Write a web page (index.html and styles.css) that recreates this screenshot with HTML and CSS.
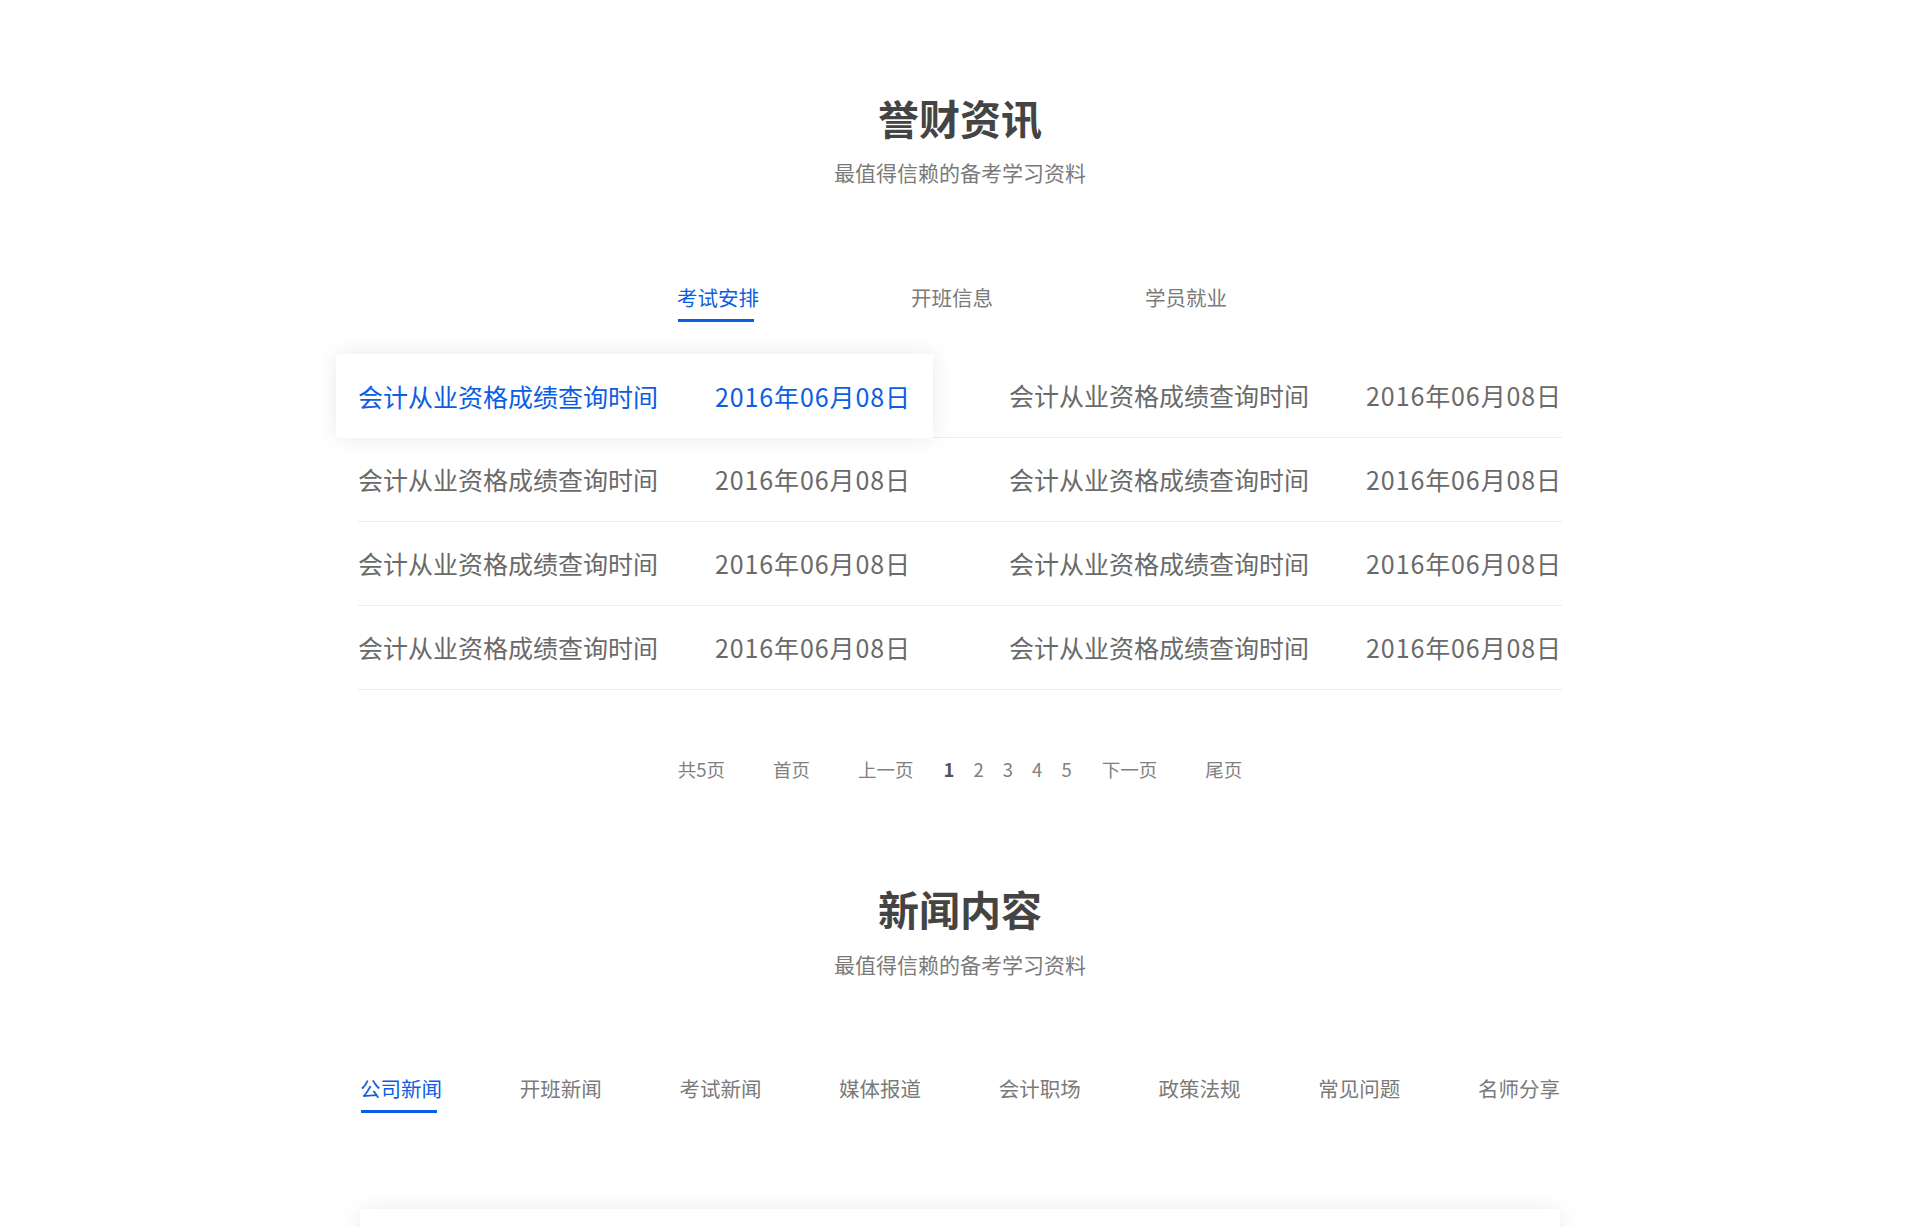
FILE: index.html
```html
<!DOCTYPE html>
<html lang="zh-CN">
<head>
<meta charset="utf-8">
<title>誉财资讯</title>
<link rel="stylesheet" href="styles.css">
</head>
<body>
<section class="sec sec-info">
  <h2 class="sec-title">誉财资讯</h2>
  <p class="sec-sub">最值得信赖的备考学习资料</p>
  <ul class="tabs tabs-info">
    <li class="tab active">考试安排</li>
    <li class="tab">开班信息</li>
    <li class="tab">学员就业</li>
  </ul>
  <div class="list">
    <div class="row">
      <a class="item active"><span class="item-title">会计从业资格成绩查询时间</span><span class="item-date">2016年06月08日</span></a>
      <a class="item"><span class="item-title">会计从业资格成绩查询时间</span><span class="item-date">2016年06月08日</span></a>
    </div>
    <div class="row">
      <a class="item"><span class="item-title">会计从业资格成绩查询时间</span><span class="item-date">2016年06月08日</span></a>
      <a class="item"><span class="item-title">会计从业资格成绩查询时间</span><span class="item-date">2016年06月08日</span></a>
    </div>
    <div class="row">
      <a class="item"><span class="item-title">会计从业资格成绩查询时间</span><span class="item-date">2016年06月08日</span></a>
      <a class="item"><span class="item-title">会计从业资格成绩查询时间</span><span class="item-date">2016年06月08日</span></a>
    </div>
    <div class="row">
      <a class="item"><span class="item-title">会计从业资格成绩查询时间</span><span class="item-date">2016年06月08日</span></a>
      <a class="item"><span class="item-title">会计从业资格成绩查询时间</span><span class="item-date">2016年06月08日</span></a>
    </div>
  </div>
  <div class="pager">
    <span class="pg-text">共5页</span>
    <a class="pg-text">首页</a>
    <a class="pg-text">上一页</a>
    <span class="pg-nums">
      <a class="pg-num cur">1</a>
      <a class="pg-num">2</a>
      <a class="pg-num">3</a>
      <a class="pg-num">4</a>
      <a class="pg-num">5</a>
    </span>
    <a class="pg-text">下一页</a>
    <a class="pg-text">尾页</a>
  </div>
</section>
<section class="sec sec-news">
  <h2 class="sec-title">新闻内容</h2>
  <p class="sec-sub">最值得信赖的备考学习资料</p>
  <ul class="tabs tabs-news">
    <li class="tab active">公司新闻</li>
    <li class="tab">开班新闻</li>
    <li class="tab">考试新闻</li>
    <li class="tab">媒体报道</li>
    <li class="tab">会计职场</li>
    <li class="tab">政策法规</li>
    <li class="tab">常见问题</li>
    <li class="tab">名师分享</li>
  </ul>
  <div class="news-card">
    <h3 class="news-title">誉财教育2016年会计从业资格考试成绩查询时间通知</h3>
  </div>
</section>
</body>
</html>
```
FILE: styles.css
```css
* {
  box-sizing: border-box;
}
html, body {
  margin: 0;
  padding: 0;
  background: #fff;
}
body {
  font-family: "Noto Sans CJK SC", "Microsoft YaHei", sans-serif;
  color: #666;
}
a {
  text-decoration: none;
  color: inherit;
  cursor: pointer;
}
.sec-title {
  margin: 0;
  font-size: 41px;
  line-height: 41px;
  font-weight: 700;
  color: #444;
  text-align: center;
}
.sec-sub {
  margin: 24px 0 0;
  font-size: 21px;
  line-height: 21px;
  color: #7a7a7a;
  text-align: center;
}
.sec-info {
  padding-top: 97px;
}
.sec-news {
  padding-top: 110px;
}
.sec-news .sec-sub {
  margin-top: 25px;
}
.tabs {
  list-style: none;
  margin: 104px auto 0;
  padding: 0;
  display: flex;
}
.tab {
  position: relative;
  font-size: 20.5px;
  line-height: 20px;
  padding-bottom: 15px;
  color: #7a7a7a;
  cursor: pointer;
}
.tab.active {
  color: #0b5ee3;
}
.tab.active::after {
  content: "";
  position: absolute;
  left: 1px;
  bottom: 0;
  width: 76px;
  height: 3px;
  background: #0b5ee3;
}
.tabs-info {
  justify-content: center;
  gap: 152px;
  padding-right: 16px;
}
.tabs-news {
  width: 1200px;
  justify-content: space-between;
  margin-top: 103px;
}
.list {
  width: 1204px;
  margin: 32px auto 0;
}
.row {
  height: 84px;
  display: flex;
  align-items: center;
  justify-content: space-between;
  border-bottom: 1px solid #ececec;
}
.item {
  display: flex;
  align-items: center;
  gap: 57px;
  font-size: 25px;
  line-height: 25px;
  color: #6a6a6a;
}
.item-date {
  letter-spacing: 0.9px;
}
.item.active {
  position: relative;
  z-index: 1;
  align-self: stretch;
  margin: 0 -22px -1px;
  padding: 0 22px;
  background: #fff;
  color: #0b5ee3;
  box-shadow: 0 0 20px rgba(0, 0, 0, 0.09);
}
.pager {
  margin-top: 70px;
  display: flex;
  justify-content: center;
  align-items: center;
  font-size: 18.5px;
  line-height: 18px;
  color: #808080;
}
.pg-text {
  margin: 0 24px;
}
.pg-nums {
  display: flex;
  gap: 19px;
  margin: 0 6px;
}
.pg-num.cur {
  font-weight: 700;
  color: #555;
}
.news-card {
  width: 1200px;
  height: 320px;
  margin: 96px auto 0;
  padding-top: 18px;
  background: #fff;
  box-shadow: 0 0 20px rgba(0, 0, 0, 0.08);
}
.news-title {
  margin: 0;
  font-size: 24px;
  line-height: 24px;
  font-weight: 400;
  color: #0b5ee3;
  text-align: center;
}
```
